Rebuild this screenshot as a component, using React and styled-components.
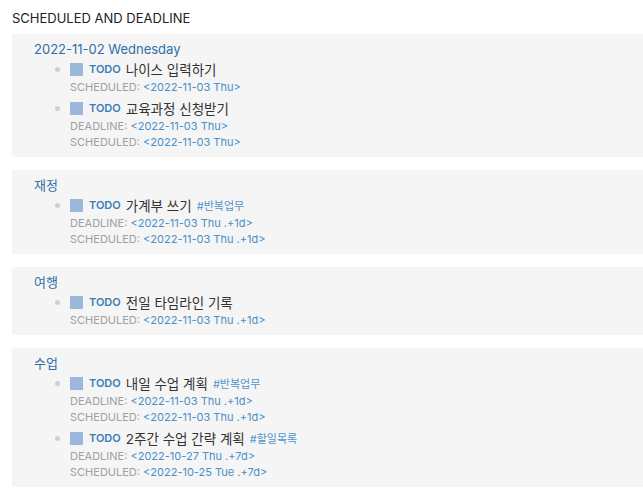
import React from "react";
import styled, { createGlobalStyle } from "styled-components";

const GlobalStyle = createGlobalStyle`
  body {
    margin: 0;
    background: #ffffff;
    font-family: Inter, "Noto Sans CJK KR", sans-serif;
  }
`;

const Page = styled.div`
  display: flex;
  flex-direction: column;
  padding: 8px 0 0 12px;
  overflow: hidden;
`;

const Title = styled.div`
  font-size: 13px;
  line-height: 20px;
  color: #222222;
  margin-bottom: 6px;
`;

const Card = styled.div`
  background-color: #f5f5f5;
  border-radius: 2px;
  padding: 5px 0 7px 22px;
  margin-bottom: 13px;
  width: 700px;
`;

const Heading = styled.div`
  font-size: 13px;
  line-height: 20px;
  color: #2f6fa8;
`;

const ItemList = styled.div`
  display: flex;
  flex-direction: column;
  gap: 3px;
  padding-left: 21px;
`;

const Item = styled.div`
  display: flex;
  gap: 10px;
`;

const Dot = styled.span`
  width: 5px;
  height: 5px;
  border-radius: 50%;
  background-color: #cfcfcf;
  margin-top: 8px;
  flex-shrink: 0;
`;

const ItemBody = styled.div`
  display: flex;
  flex-direction: column;
`;

const TitleRow = styled.div`
  display: flex;
  align-items: center;
  height: 20px;
  font-size: 13.5px;
  color: #333333;
`;

const Checkbox = styled.span`
  width: 13px;
  height: 13px;
  background-color: #9bb7d9;
  margin-right: 6px;
  flex-shrink: 0;
`;

const Marker = styled.span`
  font-size: 11px;
  font-weight: 600;
  color: #3a7db5;
  margin-right: 5px;
`;

const Tag = styled.span`
  font-size: 11px;
  color: #4f94cc;
  margin-left: 5px;
`;

const Meta = styled.div`
  font-size: 11px;
  line-height: 16px;
  color: #a0a0a0;
`;

const DateLink = styled.span`
  color: #4a8fc6;
`;

const groups = [
  {
    name: "2022-11-02 Wednesday",
    items: [
      { title: "나이스 입력하기", meta: [["SCHEDULED", "<2022-11-03 Thu>"]] },
      {
        title: "교육과정 신청받기",
        meta: [
          ["DEADLINE", "<2022-11-03 Thu>"],
          ["SCHEDULED", "<2022-11-03 Thu>"],
        ],
      },
    ],
  },
  {
    name: "재정",
    items: [
      {
        title: "가계부 쓰기",
        tag: "#반복업무",
        meta: [
          ["DEADLINE", "<2022-11-03 Thu .+1d>"],
          ["SCHEDULED", "<2022-11-03 Thu .+1d>"],
        ],
      },
    ],
  },
  {
    name: "여행",
    items: [
      {
        title: "전일 타임라인 기록",
        meta: [["SCHEDULED", "<2022-11-03 Thu .+1d>"]],
      },
    ],
  },
  {
    name: "수업",
    items: [
      {
        title: "내일 수업 계획",
        tag: "#반복업무",
        meta: [
          ["DEADLINE", "<2022-11-03 Thu .+1d>"],
          ["SCHEDULED", "<2022-11-03 Thu .+1d>"],
        ],
      },
      {
        title: "2주간 수업 간략 계획",
        tag: "#할일목록",
        meta: [
          ["DEADLINE", "<2022-10-27 Thu .+7d>"],
          ["SCHEDULED", "<2022-10-25 Tue .+7d>"],
        ],
      },
    ],
  },
];

const App = () => {
  return (
    <Page>
      <GlobalStyle />
      <Title>SCHEDULED AND DEADLINE</Title>
      {groups.map((group) => (
        <Card key={group.name}>
          <Heading>{group.name}</Heading>
          <ItemList>
            {group.items.map((item) => (
              <Item key={item.title}>
                <Dot />
                <ItemBody>
                  <TitleRow>
                    <Checkbox />
                    <Marker>TODO</Marker>
                    {item.title}
                    {item.tag && <Tag>{item.tag}</Tag>}
                  </TitleRow>
                  {item.meta.map(([label, date]) => (
                    <Meta key={label}>
                      {label}: <DateLink>{date}</DateLink>
                    </Meta>
                  ))}
                </ItemBody>
              </Item>
            ))}
          </ItemList>
        </Card>
      ))}
    </Page>
  );
};

export default App;
